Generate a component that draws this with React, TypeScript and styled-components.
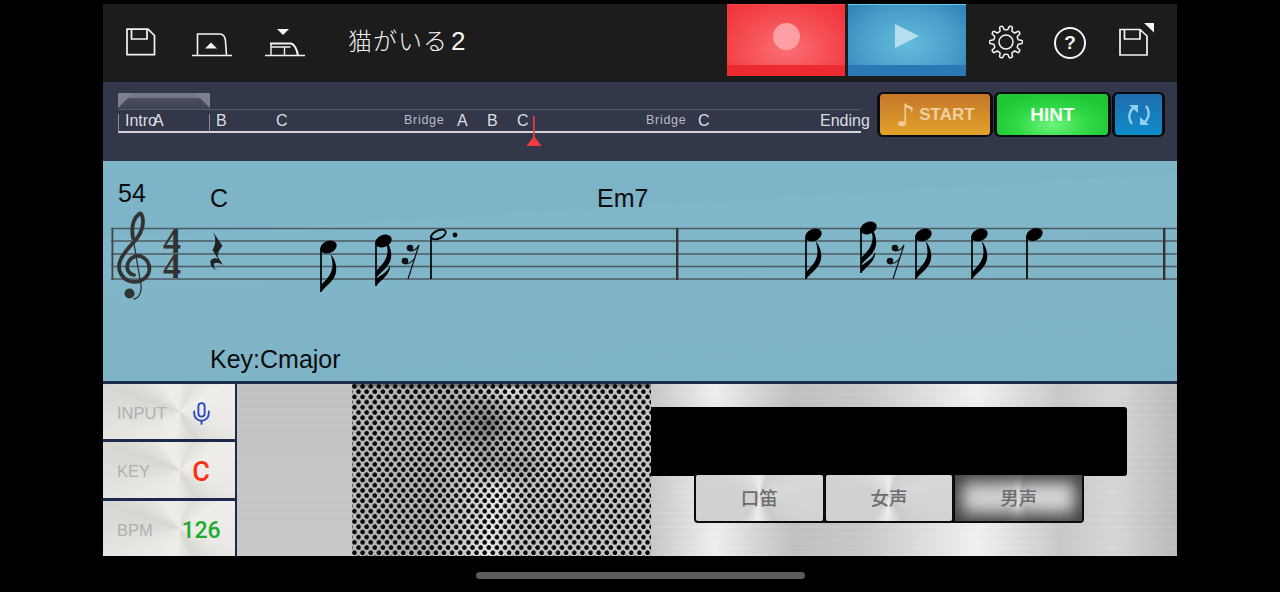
import React from 'react';
import styled, { createGlobalStyle } from 'styled-components';
import { Mic } from 'lucide-react';

const GlobalStyle = createGlobalStyle`
  html, body { margin: 0; padding: 0; background: #000; }
  body { font-family: "Liberation Sans", "Noto Sans CJK JP", sans-serif; overflow: hidden; }
`;

const Screen = styled.div`
  width: 1280px;
  height: 592px;
  background: #000;
  padding: 4px 103px 0;
  box-sizing: border-box;
  position: relative;
`;

const Panel = styled.div`
  width: 1074px;
  height: 552px;
  display: flex;
  flex-direction: column;
`;

const TopBar = styled.div`
  height: 78px;
  background: #1c1c1c;
  display: flex;
  align-items: flex-start;
  padding: 0 22px 0 23px;
  box-sizing: border-box;
`;

const IconButton = styled.div<{ $left: number; $top: number }>`
  margin-left: ${p => p.$left}px;
  margin-top: ${p => p.$top}px;
  display: flex;
  color: #f4f4f4;
`;

const Title = styled.div`
  margin-left: 43px;
  margin-top: 18px;
  font-family: "Noto Sans CJK JP", sans-serif;
  font-weight: 300;
  font-size: 24px;
  line-height: 36px;
  letter-spacing: 1px;
  color: #f2f2f2;
  white-space: nowrap;
`;

const TitleDigit = styled.span`
  font-family: "Liberation Sans", sans-serif;
  font-size: 26px;
  margin-left: 3px;
`;

const TransportGroup = styled.div`
  margin-left: auto;
  display: flex;
  gap: 3px;
`;

const Transport = styled.div<{ $kind: 'rec' | 'play' }>`
  width: 118px;
  height: 72px;
  display: flex;
  align-items: center;
  justify-content: center;
  padding-bottom: 9px;
  box-sizing: border-box;
  position: relative;
  border-top: ${p => (p.$kind === 'play' ? '1px solid #5fd0ea' : '1px solid #f04a4e')};
  background: ${p =>
    p.$kind === 'rec'
      ? 'radial-gradient(ellipse 70% 85% at 50% 62%, #f96f73 0%, #f4494f 60%, #ef3238 100%)'
      : 'radial-gradient(ellipse 70% 85% at 50% 55%, #64bcdb 0%, #4a9fcb 55%, #2f7db6 100%)'};
  &::after {
    content: '';
    position: absolute;
    left: 0;
    right: 0;
    bottom: 0;
    height: 11px;
    background: ${p => (p.$kind === 'rec' ? '#ec2b31' : '#2a78b6')};
  }
`;

const RecDot = styled.div`
  width: 27px;
  height: 27px;
  border-radius: 50%;
  background: #fda0a6;
`;

const HelpCircle = styled.div`
  width: 28px;
  height: 28px;
  border: 2px solid #f4f4f4;
  border-radius: 50%;
  display: flex;
  align-items: center;
  justify-content: center;
  font-size: 19px;
  font-weight: 700;
  color: #f4f4f4;
`;

const TimelineBar = styled.div`
  height: 79px;
  background: #323749;
  display: flex;
  align-items: flex-start;
  padding: 10px 0 0 15px;
  box-sizing: border-box;
`;

const Track = styled.div`
  width: 743px;
  height: 60px;
  position: relative;
  flex: none;
`;

const SectionTab = styled.svg`
  position: absolute;
  left: 0;
  top: 1px;
`;

const TrackLine = styled.div<{ $top: number; $strong?: boolean }>`
  position: absolute;
  left: 0;
  right: 0;
  top: ${p => p.$top}px;
  height: ${p => (p.$strong ? 2 : 1)}px;
  background: ${p => (p.$strong ? '#d4d5d9' : '#555a6c')};
`;

const TrackTick = styled.div<{ $left: number }>`
  position: absolute;
  left: ${p => p.$left}px;
  top: 22px;
  width: 1px;
  height: 18px;
  background: #8b8e9b;
`;

const SectionLabel = styled.span<{ $left: number; $small?: boolean }>`
  position: absolute;
  left: ${p => p.$left}px;
  top: ${p => (p.$small ? 19 : 20)}px;
  font-size: ${p => (p.$small ? 12.5 : 16)}px;
  line-height: 18px;
  letter-spacing: ${p => (p.$small ? 0.7 : 0)}px;
  color: ${p => (p.$small ? '#b9bbc4' : '#dcdde1')};
  white-space: nowrap;
`;

const Playhead = styled.svg`
  position: absolute;
  left: 408px;
  top: 24px;
`;

const ActionGroup = styled.div`
  margin-left: 16px;
  display: flex;
  gap: 1px;
`;

const ActionButton = styled.div<{ $kind: 'start' | 'hint' | 'loop' }>`
  width: ${p => (p.$kind === 'start' ? 110 : p.$kind === 'hint' ? 111 : 47)}px;
  height: 41px;
  border: solid #0b0c10;
  border-width: 2px 3px 2px 3px;
  border-radius: 6px;
  display: flex;
  align-items: center;
  justify-content: center;
  font-weight: 700;
  font-size: ${p => (p.$kind === 'start' ? 17 : 19)}px;
  background: ${p =>
    p.$kind === 'start'
      ? 'linear-gradient(#c5762a, #e3a22a)'
      : p.$kind === 'hint'
        ? 'radial-gradient(ellipse 60% 80% at 50% 75%, #6cf47c 0%, #30d844 55%, #1fc533 100%)'
        : 'linear-gradient(#1f6dac, #0f8ccb)'};
  color: ${p => (p.$kind === 'hint' ? '#f6fff6' : '#edd0a0')};
`;

const NoteGlyph = styled.span`
  font-family: "DejaVu Sans", sans-serif;
  font-size: 31px;
  font-weight: 400;
  color: #efcd95;
  margin-right: 4px;
  line-height: 30px;
`;

const ScoreArea = styled.div`
  height: 220px;
  position: relative;
  background: linear-gradient(176.6deg, #7db4c8 0, #7db4c8 27%, #81b7ca 27.3%, #80b5c8 60%, #7db3c6 100%);
  border-bottom: 3px solid #1c2a4c;
  flex: none;
`;

const ScoreText = styled.span<{ $left: number; $top: number }>`
  position: absolute;
  left: ${p => p.$left}px;
  top: ${p => p.$top}px;
  font-size: 25px;
  line-height: 30px;
  color: #0c0c0c;
  white-space: nowrap;
`;

const Staff = styled.svg`
  position: absolute;
  left: 0;
  top: 0;
`;

const BottomArea = styled.div`
  flex: 1;
  display: flex;
  min-height: 0;
`;

const SideColumn = styled.div`
  width: 134px;
  box-sizing: border-box;
  display: flex;
  flex-direction: column;
  gap: 3px;
  background: #1c2a4c;
  border-right: 2px solid #1c2a4c;
  flex: none;
`;

const SideCell = styled.div`
  flex: 1;
  display: flex;
  align-items: center;
  justify-content: space-between;
  padding: 4px 11px 0 14px;
  background: conic-gradient(from 0deg at 58% 50%, #ecebe7 0deg, #dededb 25deg, #efeeea 60deg, #eae9e5 110deg, #d8d8d5 150deg, #eeede9 190deg, #e9e8e4 240deg, #d6d6d3 290deg, #eeede9 330deg, #ecebe7 360deg);
`;

const CellLabel = styled.span`
  font-size: 16.5px;
  color: #b0b0ae;
`;

const CellValue = styled.span<{ $color: string; $size: number }>`
  width: 46px;
  display: flex;
  justify-content: center;
  font-family: Roboto, sans-serif;
  font-size: ${p => p.$size}px;
  font-weight: 500;
  color: ${p => p.$color};
`;

const BrushedStrip = styled.div`
  width: 115px;
  flex: none;
  background:
    repeating-linear-gradient(0deg, rgba(255, 255, 255, 0.025) 0 3px, rgba(0, 0, 0, 0.012) 3px 8px),
    linear-gradient(#c3c3c3, #c6c6c6 50%, #cacaca);
`;

const Perforated = styled.div`
  width: 299px;
  flex: none;
  background:
    radial-gradient(circle at 2.5px 2.5px, #0a0609 2px, transparent 2.6px) 0 0 / 8.15px 10.4px,
    radial-gradient(circle at 2.5px 2.5px, #0a0609 2px, transparent 2.6px) 4.07px 5.2px / 8.15px 10.4px,
    radial-gradient(ellipse 55px 40px at 46% 24%, rgba(50, 50, 50, 0.55), transparent),
    radial-gradient(ellipse 45px 25px at 50% 47%, rgba(60, 60, 60, 0.4), transparent),
    linear-gradient(#6a6a6a 0, transparent 5px),
    linear-gradient(97deg, #bdbdbd 0%, #b0b0b0 30%, #d8d8d8 45%, #ececec 49%, #c2c2c2 58%, #c8c8c8 100%);
`;

const SteelPanel = styled.div`
  flex: 1;
  padding-top: 23px;
  background:
    repeating-linear-gradient(0deg, rgba(255, 255, 255, 0.025) 0 2px, rgba(0, 0, 0, 0.012) 2px 7px),
    linear-gradient(90deg, #c8c8c8 0%, #f0f0f0 12%, #c2c2c2 27%, #c9c9c9 40%, #f2f2f2 62%, #c9c9c9 78%, #d8d8d8 88%, #bcbcbc 100%);
`;

const Display = styled.div`
  width: 476px;
  height: 69px;
  background: #000;
  border-radius: 0 3px 3px 0;
`;

const VoiceGroup = styled.div`
  margin-left: 43px;
  margin-top: -1px;
  width: 390px;
  height: 48px;
  box-sizing: border-box;
  display: flex;
  gap: 3px;
  padding: 0 2px 2px;
  background: #0c0c0c;
  border-radius: 0 0 4px 4px;
`;

const VoiceButton = styled.div<{ $active?: boolean }>`
  flex: 1;
  border-radius: 2px;
  display: flex;
  align-items: center;
  justify-content: center;
  padding-bottom: 3px;
  font-family: "Noto Sans CJK JP", sans-serif;
  font-size: 18.5px;
  font-weight: 500;
  color: #6d6d6d;
  background: conic-gradient(from 0deg at 50% 45%, #ececec 0deg, #cfcfcf 22deg, #d8d8d8 70deg, #d2d2d2 120deg, #cacaca 150deg, #ececec 185deg, #d0d0d0 215deg, #d2d2d2 290deg, #dedede 330deg, #ececec 360deg);
  box-shadow: ${p => (p.$active ? 'inset 0 0 16px 7px rgba(20, 20, 20, 0.78)' : 'none')};
`;

const HomeIndicator = styled.div`
  position: absolute;
  left: 476px;
  top: 572px;
  width: 329px;
  height: 7px;
  border-radius: 4px;
  background: #5b5b5b;
`;

const SaveIcon = () => (
  <svg width="30" height="28" viewBox="0 0 30 28" fill="none" stroke="currentColor" strokeWidth="1.7">
    <path d="M1 1.2H22L28.5 7.5V26.6H1Z" />
    <path d="M5.5 1.2V11H21V1.2" />
  </svg>
);

const UploadIcon = () => (
  <svg width="40" height="26" viewBox="0 0 40 26" fill="none" stroke="currentColor" strokeWidth="1.6">
    <path d="M0 24.5H40" />
    <path d="M5.5 24.5V3H28C31 3 33 6 33.5 10L34.5 24.5" />
    <path d="M13 17.5L19 11.5L25 17.5Z" fill="currentColor" stroke="none" />
  </svg>
);

const DownloadIcon = () => (
  <svg width="40" height="28" viewBox="0 0 40 28" fill="none" stroke="currentColor" strokeWidth="1.6">
    <path d="M12 0H24L18 6Z" fill="currentColor" stroke="none" />
    <path d="M0 26.5H40" />
    <path d="M5 14.5H26C29 15 32 20 33 26.5" strokeWidth="2" />
    <path d="M6 26.5V15M19.5 26.5V18M6 18H25.5" strokeWidth="1.4" />
  </svg>
);

// scalloped outline for the settings gear
const gearPath = (() => {
  const teeth = 10;
  const point = (r: number, a: number) => `${(17 + r * Math.cos(a)).toFixed(2)} ${(17 + r * Math.sin(a)).toFixed(2)}`;
  let d = '';
  for (let i = 0; i < teeth; i++) {
    const step = (Math.PI * 2) / teeth;
    const a = i * step;
    d += `${i === 0 ? 'M' : 'L'}${point(12.5, a - step * 0.28)} `;
    d += `L${point(16, a - step * 0.16)} Q${point(17.2, a)} ${point(16, a + step * 0.16)} L${point(12.5, a + step * 0.28)} `;
    d += `Q${point(12, a + step * 0.5)} ${point(12.5, a + step * 0.72)} `;
  }
  return d + 'Z';
})();

const GearIcon = () => (
  <svg width="34" height="34" viewBox="0 0 34 34" fill="none" stroke="currentColor" strokeWidth="1.5" strokeLinejoin="round">
    <path d={gearPath} />
    <circle cx="17" cy="17" r="7" />
  </svg>
);

const LoopIcon = () => (
  <svg width="24" height="24" viewBox="0 0 24 24" fill="none" stroke="#8fd0ee" strokeWidth="2.4">
    <path d="M7.5 4C2 8 0.5 15 5 21" />
    <path d="M16.5 20C22 16 23.5 9 19 3" />
    <path d="M2 2H11V10Z" fill="#8fd0ee" stroke="none" />
    <path d="M22 22H13V14Z" fill="#8fd0ee" stroke="none" />
  </svg>
);

const FLAG = 'M0 0V-7C5 -12 11 -18 11.5 -26C11.5 -30 11 -34 9.5 -38C14 -33 16 -26 15 -20C14 -12 6 -7 0 0Z';
const SHORT_FLAG = 'M0 0V-7C5 -11 12 -14 14 -21C15 -12 6 -7 0 0Z';

type NoteProps = { x: number; y: number; bottom: number; flags?: number; hollow?: boolean };

const Note = ({ x, y, bottom, flags = 0, hollow }: NoteProps) => (
  <g>
    <ellipse
      cx={x + 7.5}
      cy={y}
      rx={hollow ? 7.8 : 8.6}
      ry={hollow ? 4 : 6}
      transform={`rotate(-24 ${x + 7.5} ${y})`}
      fill={hollow ? 'none' : '#000'}
      stroke="#000"
      strokeWidth={hollow ? 1.8 : 0}
    />
    <line x1={x} y1={y + 1} x2={x} y2={bottom} stroke="#000" strokeWidth={1.7} />
    {flags === 1 && <path d={FLAG} transform={`translate(${x} ${bottom})`} />}
    {flags === 2 && (
      <>
        <path d={FLAG} transform={`translate(${x} ${bottom - 8})`} />
        <path d={SHORT_FLAG} transform={`translate(${x} ${bottom})`} />
      </>
    )}
  </g>
);

const SixteenthRest = ({ x }: { x: number }) => (
  <g transform={`translate(${x} 0)`} fill="#111">
    <circle cx="1" cy="248" r="3.3" />
    <circle cx="-4" cy="261" r="3.3" />
    <path d="M1 251C4 251 8 249 10 245L-1 279" fill="none" stroke="#111" strokeWidth="1.2" />
    <path d="M-4 264C0 264 3 262 6 258" fill="none" stroke="#111" strokeWidth="1.2" />
  </g>
);

const STAFF_LINES = [228.5, 241, 254, 266.5, 279];

const Score = () => (
  <Staff width="1074" height="220" viewBox="103 161 1074 220">
    {STAFF_LINES.map(y => (
      <line key={y} x1="111" y1={y} x2="1177" y2={y} stroke="#4e5a62" strokeWidth="1.7" />
    ))}
    <rect x="111.5" y="228" width="1.8" height="52" fill="#444" />
    <rect x="676" y="228" width="2.4" height="52" fill="#333" />
    <rect x="1163" y="228" width="2.4" height="52" fill="#333" />
    <g fill="none" stroke="#333" strokeLinecap="round">
      <path
        d="M134 275C128 274 126 268 128 263C131 256 139 254 144 258C151 263 151 273 145 278C138 284 126 283 121 274C115 264 123 254 132 244C137 239 143 232 143 222C143 216 141 212 139 214C134 218 131 226 133 238"
        strokeWidth="3.8"
      />
      <path d="M133 238L141 285C142 292 139 298 134 299" strokeWidth="1.3" />
    </g>
    <circle cx="129.5" cy="293.5" r="5" fill="#333" />
    <text x="172" y="253" textAnchor="middle" fontFamily="Liberation Serif" fontWeight="700" fontSize="36" fill="#333">4</text>
    <text x="172" y="278" textAnchor="middle" fontFamily="Liberation Serif" fontWeight="700" fontSize="36" fill="#333">4</text>
    <path
      d="M213 232L222.5 246C219 250 217 254 218 257L223 265C218 262 213 262 214 266C214 268 215 269 217 270C212 269 209 263 211 260C213 258 216 258 218 259L212.5 250C215 246 217 240 213 232Z"
      fill="#222"
    />
    <Note x={321} y={247} bottom={292} flags={1} />
    <Note x={376} y={241} bottom={286} flags={2} />
    <SixteenthRest x={409} />
    <Note x={431} y={234.5} bottom={279} hollow />
    <circle cx="455" cy="235" r="2.4" />
    <Note x={806} y={235} bottom={279} flags={1} />
    <Note x={861} y={228} bottom={273} flags={2} />
    <SixteenthRest x={894} />
    <Note x={916} y={235} bottom={279} flags={1} />
    <Note x={972} y={235} bottom={279} flags={1} />
    <Note x={1027} y={234.5} bottom={279} />
  </Staff>
);

const SECTIONS = [
  { label: 'Intro', left: 7 },
  { label: 'A', left: 35 },
  { label: 'B', left: 98 },
  { label: 'C', left: 158 },
  { label: 'A', left: 339 },
  { label: 'B', left: 369 },
  { label: 'C', left: 399 },
  { label: 'C', left: 580 },
  { label: 'Ending', left: 702 },
];

export default function App() {
  return (
    <>
      <GlobalStyle />
      <Screen>
        <Panel>
          <TopBar>
            <IconButton $left={0} $top={24}><SaveIcon /></IconButton>
            <IconButton $left={36} $top={27}><UploadIcon /></IconButton>
            <IconButton $left={33} $top={25}><DownloadIcon /></IconButton>
            <Title>猫がいる<TitleDigit>2</TitleDigit></Title>
            <TransportGroup>
              <Transport $kind="rec"><RecDot /></Transport>
              <Transport $kind="play">
                <svg width="26" height="26" viewBox="0 0 26 26"><path d="M1 1L25 13L1 25Z" fill="#b4dfef" /></svg>
              </Transport>
            </TransportGroup>
            <IconButton $left={23} $top={21}><GearIcon /></IconButton>
            <IconButton $left={31} $top={23}><HelpCircle>?</HelpCircle></IconButton>
            <IconButton $left={33} $top={19}>
              <svg width="36" height="34" viewBox="0 0 36 34" fill="none" stroke="currentColor" strokeWidth="1.7">
                <path d="M1 6.5H21L28 13V32H1Z" />
                <path d="M5.5 6.5V16H21V6.5" />
                <path d="M25 0H35V9.5Z" fill="currentColor" stroke="none" />
              </svg>
            </IconButton>
          </TopBar>
          <TimelineBar>
            <Track>
              <SectionTab width="92" height="16" viewBox="0 0 92 16">
                <defs>
                  <linearGradient id="tabFill" x1="0" y1="0" x2="0" y2="1">
                    <stop offset="0.3" stopColor="#75788a" />
                    <stop offset="0.32" stopColor="#4d5163" />
                    <stop offset="1" stopColor="#3c4153" />
                  </linearGradient>
                </defs>
                <path d="M0 0H92V16H0Z" fill="url(#tabFill)" />
                <path d="M0 0H15L0 15Z" fill="#7d808e" />
                <path d="M77 0H92V15Z" fill="#7d808e" />
              </SectionTab>
              <TrackLine $top={17} />
              <TrackLine $top={39} $strong />
              <TrackTick $left={0} />
              <TrackTick $left={91} />
              {SECTIONS.map((s, i) => (
                <SectionLabel key={i} $left={s.left}>{s.label}</SectionLabel>
              ))}
              <SectionLabel $left={286} $small>Bridge</SectionLabel>
              <SectionLabel $left={528} $small>Bridge</SectionLabel>
              <Playhead width="16" height="30" viewBox="0 0 16 30">
                <rect x="7" y="0" width="1.7" height="24" fill="#ef3b41" />
                <path d="M0.5 30L8 20L15.5 30Z" fill="#ef3b41" />
              </Playhead>
            </Track>
            <ActionGroup>
              <ActionButton $kind="start"><NoteGlyph>♪</NoteGlyph>START</ActionButton>
              <ActionButton $kind="hint">HINT</ActionButton>
              <ActionButton $kind="loop"><LoopIcon /></ActionButton>
            </ActionGroup>
          </TimelineBar>
          <ScoreArea>
            <Score />
            <ScoreText $left={15} $top={17}>54</ScoreText>
            <ScoreText $left={107} $top={22}>C</ScoreText>
            <ScoreText $left={494} $top={22}>Em7</ScoreText>
            <ScoreText $left={107} $top={183}>Key:Cmajor</ScoreText>
          </ScoreArea>
          <BottomArea>
            <SideColumn>
              <SideCell>
                <CellLabel>INPUT</CellLabel>
                <CellValue $color="#2a49bd" $size={25}><Mic size={25} strokeWidth={1.8} /></CellValue>
              </SideCell>
              <SideCell>
                <CellLabel>KEY</CellLabel>
                <CellValue $color="#fa3212" $size={27}>C</CellValue>
              </SideCell>
              <SideCell>
                <CellLabel>BPM</CellLabel>
                <CellValue $color="#1eab2e" $size={23}>126</CellValue>
              </SideCell>
            </SideColumn>
            <BrushedStrip />
            <Perforated />
            <SteelPanel>
              <Display />
              <VoiceGroup>
                <VoiceButton>口笛</VoiceButton>
                <VoiceButton>女声</VoiceButton>
                <VoiceButton $active>男声</VoiceButton>
              </VoiceGroup>
            </SteelPanel>
          </BottomArea>
        </Panel>
        <HomeIndicator />
      </Screen>
    </>
  );
}
